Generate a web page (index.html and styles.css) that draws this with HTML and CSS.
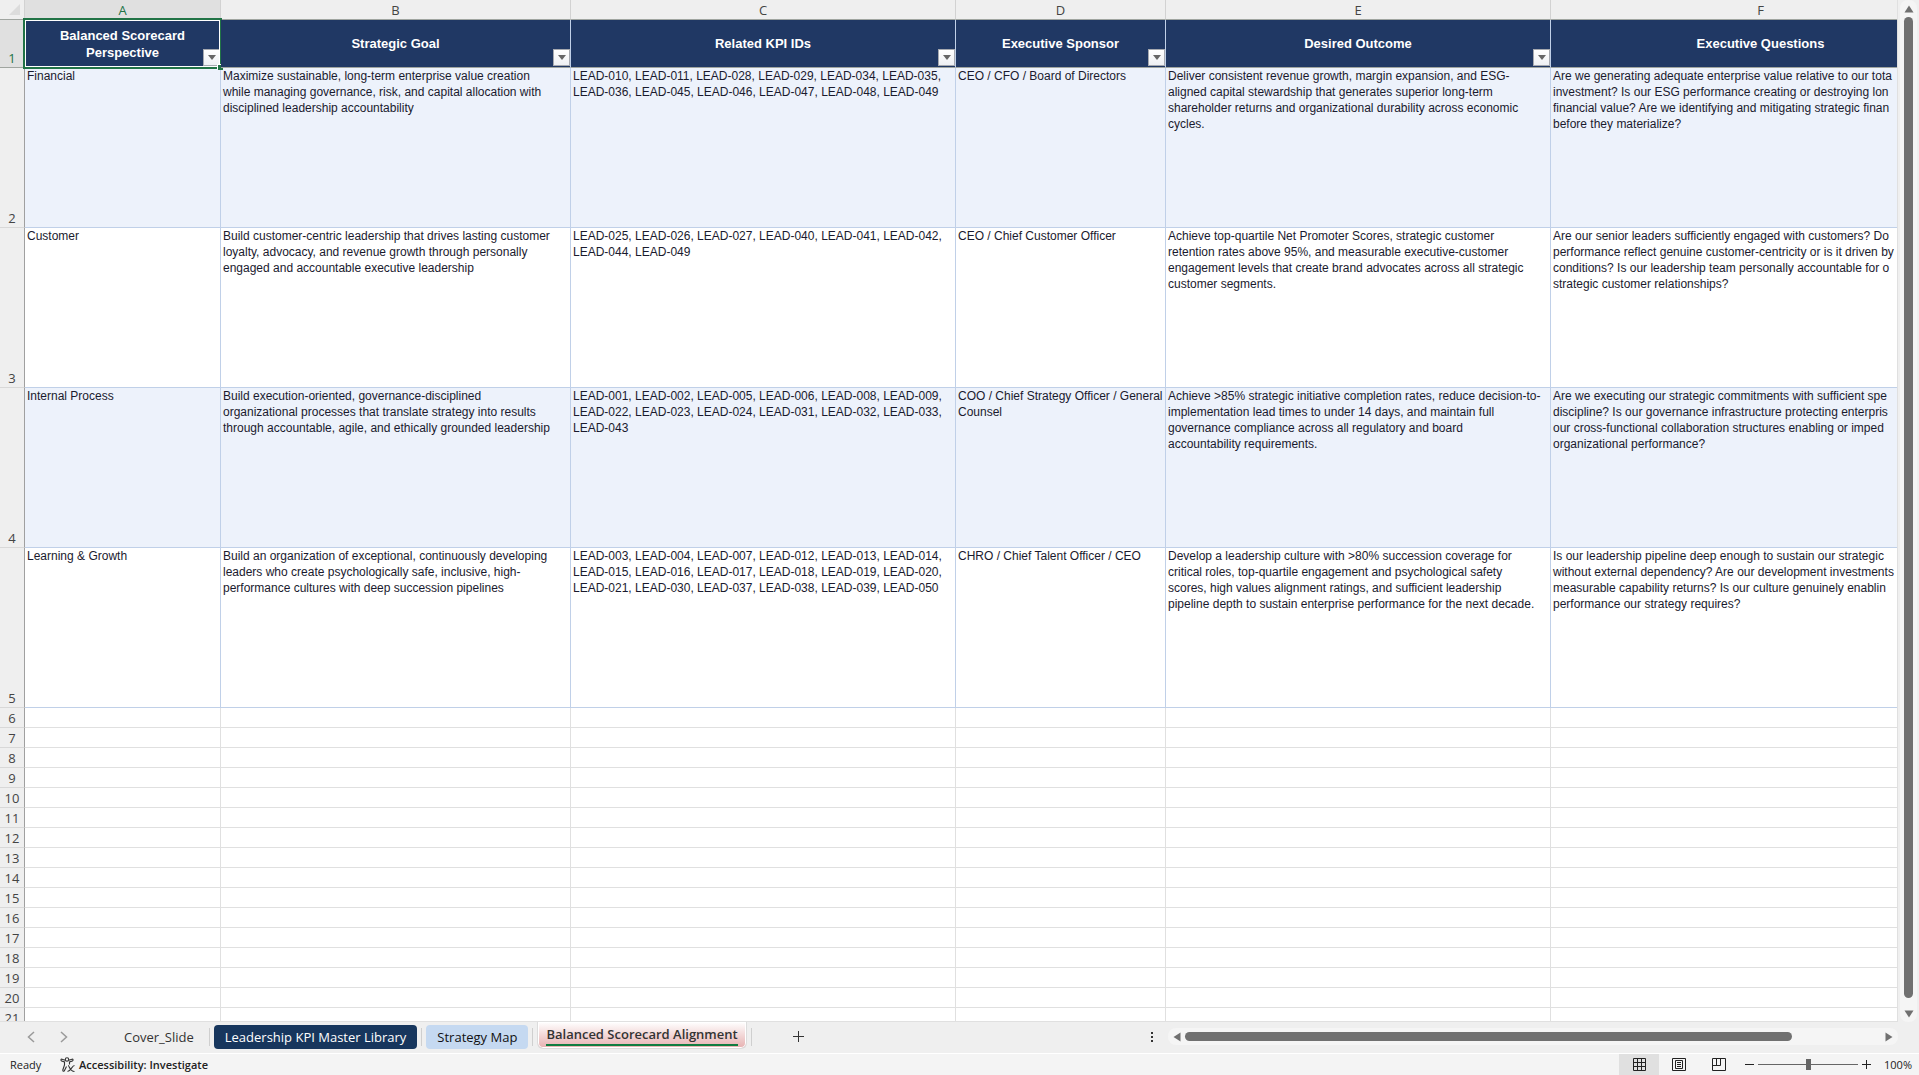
FILE: index.html
```html
<!DOCTYPE html>
<html lang="en">
<head>
<meta charset="utf-8">
<title>Balanced Scorecard Alignment</title>
<link rel="stylesheet" href="styles.css">
</head>
<body>
<main class="workbook">
  <div class="sheet-area">
    <div class="sheet">
      <table class="grid">
        <colgroup><col class="c-num"><col class="c-a"><col class="c-b"><col class="c-c"><col class="c-d"><col class="c-e"><col class="c-f"></colgroup>
        <thead>
          <tr class="letters"><th class="corner" aria-label="Select all"><svg width="11" height="11" viewBox="0 0 11 11"><path d="M11 0V11H0Z" fill="#dcdcdc"/></svg></th><th class="active" scope="col">A</th><th scope="col">B</th><th scope="col">C</th><th scope="col">D</th><th scope="col">E</th><th scope="col">F</th></tr>
        </thead>
        <tbody>
          <tr class="titles">
            <th class="num active" scope="row">1</th>
            <td class="selected">Balanced Scorecard<br>Perspective<button class="filter" aria-label="Filter perspective"><svg width="8" height="5" viewBox="0 0 8 5"><path d="M0 0H8L4 5Z" fill="#666"/></svg></button><span class="cursor"></span></td>
            <td>Strategic Goal<button class="filter" aria-label="Filter goal"><svg width="8" height="5" viewBox="0 0 8 5"><path d="M0 0H8L4 5Z" fill="#666"/></svg></button></td>
            <td>Related KPI IDs<button class="filter" aria-label="Filter KPI IDs"><svg width="8" height="5" viewBox="0 0 8 5"><path d="M0 0H8L4 5Z" fill="#666"/></svg></button></td>
            <td>Executive Sponsor<button class="filter" aria-label="Filter sponsor"><svg width="8" height="5" viewBox="0 0 8 5"><path d="M0 0H8L4 5Z" fill="#666"/></svg></button></td>
            <td>Desired Outcome<button class="filter" aria-label="Filter outcome"><svg width="8" height="5" viewBox="0 0 8 5"><path d="M0 0H8L4 5Z" fill="#666"/></svg></button></td>
            <td>Executive Questions</td>
          </tr>
          <tr class="entry tinted">
            <th class="num" scope="row">2</th>
            <td>Financial</td>
            <td>Maximize sustainable, long-term enterprise value creation<br>while managing governance, risk, and capital allocation with<br>disciplined leadership accountability</td>
            <td>LEAD-010, LEAD-011, LEAD-028, LEAD-029, LEAD-034, LEAD-035,<br>LEAD-036, LEAD-045, LEAD-046, LEAD-047, LEAD-048, LEAD-049</td>
            <td>CEO / CFO / Board of Directors</td>
            <td>Deliver consistent revenue growth, margin expansion, and ESG-<br>aligned capital stewardship that generates superior long-term<br>shareholder returns and organizational durability across economic<br>cycles.</td>
            <td>Are we generating adequate enterprise value relative to our tota<br>investment? Is our ESG performance creating or destroying lon<br>financial value? Are we identifying and mitigating strategic finan<br>before they materialize?</td>
          </tr>
          <tr class="entry">
            <th class="num" scope="row">3</th>
            <td>Customer</td>
            <td>Build customer-centric leadership that drives lasting customer<br>loyalty, advocacy, and revenue growth through personally<br>engaged and accountable executive leadership</td>
            <td>LEAD-025, LEAD-026, LEAD-027, LEAD-040, LEAD-041, LEAD-042,<br>LEAD-044, LEAD-049</td>
            <td>CEO / Chief Customer Officer</td>
            <td>Achieve top-quartile Net Promoter Scores, strategic customer<br>retention rates above 95%, and measurable executive-customer<br>engagement levels that create brand advocates across all strategic<br>customer segments.</td>
            <td>Are our senior leaders sufficiently engaged with customers? Do<br>performance reflect genuine customer-centricity or is it driven by<br>conditions? Is our leadership team personally accountable for o<br>strategic customer relationships?</td>
          </tr>
          <tr class="entry tinted">
            <th class="num" scope="row">4</th>
            <td>Internal Process</td>
            <td>Build execution-oriented, governance-disciplined<br>organizational processes that translate strategy into results<br>through accountable, agile, and ethically grounded leadership</td>
            <td>LEAD-001, LEAD-002, LEAD-005, LEAD-006, LEAD-008, LEAD-009,<br>LEAD-022, LEAD-023, LEAD-024, LEAD-031, LEAD-032, LEAD-033,<br>LEAD-043</td>
            <td>COO / Chief Strategy Officer / General<br>Counsel</td>
            <td>Achieve &gt;85% strategic initiative completion rates, reduce decision-to-<br>implementation lead times to under 14 days, and maintain full<br>governance compliance across all regulatory and board<br>accountability requirements.</td>
            <td>Are we executing our strategic commitments with sufficient spe<br>discipline? Is our governance infrastructure protecting enterpris<br>our cross-functional collaboration structures enabling or imped<br>organizational performance?</td>
          </tr>
          <tr class="entry">
            <th class="num" scope="row">5</th>
            <td>Learning &amp; Growth</td>
            <td>Build an organization of exceptional, continuously developing<br>leaders who create psychologically safe, inclusive, high-<br>performance cultures with deep succession pipelines</td>
            <td>LEAD-003, LEAD-004, LEAD-007, LEAD-012, LEAD-013, LEAD-014,<br>LEAD-015, LEAD-016, LEAD-017, LEAD-018, LEAD-019, LEAD-020,<br>LEAD-021, LEAD-030, LEAD-037, LEAD-038, LEAD-039, LEAD-050</td>
            <td>CHRO / Chief Talent Officer / CEO</td>
            <td>Develop a leadership culture with &gt;80% succession coverage for<br>critical roles, top-quartile engagement and psychological safety<br>scores, high values alignment ratings, and sufficient leadership<br>pipeline depth to sustain enterprise performance for the next decade.</td>
            <td>Is our leadership pipeline deep enough to sustain our strategic<br>without external dependency? Are our development investments<br>measurable capability returns? Is our culture genuinely enablin<br>performance our strategy requires?</td>
          </tr>
          <tr><th class="num" scope="row">6</th><td></td><td></td><td></td><td></td><td></td><td></td></tr>
          <tr><th class="num" scope="row">7</th><td></td><td></td><td></td><td></td><td></td><td></td></tr>
          <tr><th class="num" scope="row">8</th><td></td><td></td><td></td><td></td><td></td><td></td></tr>
          <tr><th class="num" scope="row">9</th><td></td><td></td><td></td><td></td><td></td><td></td></tr>
          <tr><th class="num" scope="row">10</th><td></td><td></td><td></td><td></td><td></td><td></td></tr>
          <tr><th class="num" scope="row">11</th><td></td><td></td><td></td><td></td><td></td><td></td></tr>
          <tr><th class="num" scope="row">12</th><td></td><td></td><td></td><td></td><td></td><td></td></tr>
          <tr><th class="num" scope="row">13</th><td></td><td></td><td></td><td></td><td></td><td></td></tr>
          <tr><th class="num" scope="row">14</th><td></td><td></td><td></td><td></td><td></td><td></td></tr>
          <tr><th class="num" scope="row">15</th><td></td><td></td><td></td><td></td><td></td><td></td></tr>
          <tr><th class="num" scope="row">16</th><td></td><td></td><td></td><td></td><td></td><td></td></tr>
          <tr><th class="num" scope="row">17</th><td></td><td></td><td></td><td></td><td></td><td></td></tr>
          <tr><th class="num" scope="row">18</th><td></td><td></td><td></td><td></td><td></td><td></td></tr>
          <tr><th class="num" scope="row">19</th><td></td><td></td><td></td><td></td><td></td><td></td></tr>
          <tr><th class="num" scope="row">20</th><td></td><td></td><td></td><td></td><td></td><td></td></tr>
          <tr><th class="num" scope="row">21</th><td></td><td></td><td></td><td></td><td></td><td></td></tr>
        </tbody>
      </table>
    </div>
    <div class="vscroll">
      <button class="arrow" aria-label="Scroll up"><svg width="10" height="8" viewBox="0 0 10 8"><path d="M5 0.500L9.500 7.500H0.500Z" fill="#707070"/></svg></button>
      <div class="vthumb"></div>
      <button class="arrow" aria-label="Scroll down"><svg width="10" height="8" viewBox="0 0 10 8"><path d="M5 7.500L9.500 0.500H0.500Z" fill="#707070"/></svg></button>
    </div>
  </div>

  <nav class="tabbar" aria-label="Sheets">
    <div class="steps">
      <button aria-label="Previous sheet"><svg width="8" height="12" viewBox="0 0 8 12"><path d="M7 1L1.500 6L7 11" fill="none" stroke="#9a9a9a" stroke-width="1.500"/></svg></button>
      <button aria-label="Next sheet"><svg width="8" height="12" viewBox="0 0 8 12"><path d="M1 1L6.500 6L1 11" fill="none" stroke="#9a9a9a" stroke-width="1.500"/></svg></button>
    </div>
    <button class="tab">Cover_Slide</button>
    <i class="divider"></i>
    <button class="tab navy">Leadership KPI Master Library</button>
    <i class="divider"></i>
    <button class="tab blue">Strategy Map</button>
    <i class="divider"></i>
    <button class="tab current"><span>Balanced Scorecard Alignment</span></button>
    <i class="divider"></i>
    <button class="add" aria-label="New sheet"><svg width="11" height="11" viewBox="0 0 11 11"><path d="M5.500 0V11M0 5.500H11" stroke="#333"/></svg></button>
    <div class="hgroup">
      <button class="dots" aria-label="Resize"><svg width="2" height="10" viewBox="0 0 2 10"><path d="M0 0H2V2H0ZM0 4H2V6H0ZM0 8H2V10H0Z" fill="#333"/></svg></button>
      <div class="hscroll">
        <button class="arrow" aria-label="Scroll left"><svg width="8" height="10" viewBox="0 0 8 10"><path d="M0.500 5L7.500 0.500V9.500Z" fill="#707070"/></svg></button>
        <div class="hthumb"></div>
        <button class="arrow" aria-label="Scroll right"><svg width="8" height="10" viewBox="0 0 8 10"><path d="M7.500 5L0.500 0.500V9.500Z" fill="#707070"/></svg></button>
      </div>
    </div>
  </nav>

  <footer class="status">
    <span class="ready">Ready</span>
    <button class="access"><svg width="16" height="16" viewBox="0 0 16 16" fill="none" stroke="#333" stroke-width="1.100"><circle cx="7" cy="2.500" r="1.700"/><path d="M5.300 3.300L2 2.200C.8 1.900.6 3.500 1.600 3.900L4.500 5V8L2.800 13C2.600 14.300 4.100 14.700 4.500 13.500L6.500 9.500M8.700 3.300L12 2.200C13.200 1.900 13.400 3.500 12.400 3.900L9.500 5V7.500M8 8.500C9.500 8.500 9.500 14 14.500 14.500M14.500 8.500C12 8.500 11 14 7.500 14.500"/></svg><span>Accessibility: Investigate</span></button>
    <div class="views">
      <button class="view on" aria-label="Normal"><svg width="13" height="13" viewBox="0 0 13 13"><path d="M.5 .5H12.500V12.500H.5ZM4.500 0V13M8.500 0V13M0 4.500H13M0 8.500H13" fill="none" stroke="#222"/></svg></button>
      <button class="view" aria-label="Page layout"><svg width="14" height="13" viewBox="0 0 14 13"><path d="M.5 .5H13.500V12.500H.5ZM3.500 2.500H10.500V10.500H3.500ZM5 4.500H9M5 6.500H9M5 8.500H9" fill="none" stroke="#222"/></svg></button>
      <button class="view" aria-label="Page break preview"><svg width="14" height="13" viewBox="0 0 14 13"><path d="M.5 .5H13.500V12.500H.5ZM4.500 0V7.500M8.500 0V7.500M0 7.500H8.500" fill="none" stroke="#222"/></svg></button>
    </div>
    <button class="zoomstep" aria-label="Zoom out"><svg width="9" height="9" viewBox="0 0 9 9"><path d="M0 4.500H9" stroke="#222"/></svg></button>
    <input class="slider" type="range" min="0" max="100" value="50" aria-label="Zoom">
    <button class="zoomstep" aria-label="Zoom in"><svg width="9" height="9" viewBox="0 0 9 9"><path d="M0 4.500H9M4.500 0V9" stroke="#222"/></svg></button>
    <span class="percent">100%</span>
  </footer>
</main>
</body>
</html>
```

FILE: styles.css
```css
* { box-sizing: border-box; }
body { margin: 0; font-family: "Open Sans", "Noto Sans", sans-serif; background: #efefef; color: #333; }
button { border: 0; padding: 0; margin: 0; background: none; font: inherit; color: inherit; display: flex; align-items: center; justify-content: center; }
svg { display: block; }

.workbook { height: 100vh; display: flex; flex-direction: column; overflow: hidden; }

/* Grid */
.sheet-area { flex: 1; min-height: 0; display: flex; }
.sheet { flex: 1; min-width: 0; overflow: hidden; border-right: 1px solid #e0e0e0; border-bottom: 1px solid #e0e0e0; }
.grid { table-layout: fixed; border-collapse: separate; border-spacing: 0; width: 1971px; background: #fff; }
.c-num { width: 25px; }
.c-a { width: 196px; }
.c-b { width: 350px; }
.c-c, .c-e { width: 385px; }
.c-d { width: 210px; }
.c-f { width: 420px; }
.grid th, .grid td { padding: 0; height: 20px; border-right: 1px solid #e0e0e0; border-bottom: 1px solid #e0e0e0; overflow: hidden; white-space: nowrap; }

.letters th { background: #efefef; border-right-color: #d2d2d2; border-bottom-color: #a0a5a0; font-size: 13px; line-height: 18px; font-weight: 400; color: #444; }
.letters .corner svg { margin-left: 9px; }
.grid .num { background: #efefef; border-right-color: #a0a0a0; border-bottom-color: #d8d8d8; font-size: 13px; line-height: 18px; font-weight: 400; color: #444; vertical-align: bottom; text-align: center; }
.letters .active, .grid .num.active { background: #e0e0e0; color: #217346; }
.grid .num.active { border-bottom-color: #a0a5a0; }

.grid .titles td { position: relative; height: 48px; background: #203864; color: #fff; font: 700 13px/17px "Liberation Sans", Arial, sans-serif; text-align: center; vertical-align: middle; border-right-color: #c0d0e8; border-bottom-color: #a0a5a0; }
.grid .titles .selected { overflow: visible; }
.cursor { position: absolute; inset: -2px; border: 2px solid #217346; box-shadow: inset 0 0 0 1px #fff; pointer-events: none; }
.cursor::after { content: ""; position: absolute; right: -3px; bottom: -3px; width: 5px; height: 5px; background: #217346; box-shadow: -1px -1px 0 #fff; }
.filter { position: absolute; right: 0; bottom: 1px; width: 17px; height: 17px; background: linear-gradient(#fff, #eef0f4); border: 1px solid #a6a9b0; }

.grid .entry td { height: 160px; padding: 0 2px; vertical-align: top; font: 12px/16px "Liberation Sans", Arial, sans-serif; color: #1a1a2e; border-color: #c0d0e8; }
.grid .tinted td { background: #edf2fb; }

/* Scroll bars */
.vscroll { width: 17px; margin: 0 2px; padding: 5px 0 4px; display: flex; flex-direction: column; align-items: center; gap: 4px; background: #f5f5f5; border-radius: 8px; }
.vthumb { flex: 1; width: 9px; border-radius: 5px; background: #707070; margin-bottom: 8px; }

/* Sheet tabs */
.tabbar { height: 31px; display: flex; align-items: flex-start; font-size: 13px; line-height: 20px; }
.steps { display: flex; gap: 25px; padding: 9px 0 0 27px; width: 113px; }
.tab { height: 24px; margin-top: 3px; padding: 0 11px; border-radius: 4px; white-space: nowrap; }
.divider { width: 1px; height: 18px; margin: 6px 4px 0; background: #cfcfcf; }
.navy { background: #17365d; color: #fff; }
.blue { background: #c5d9f1; color: #111; }
.current { height: 27px; margin-top: 0; padding: 0 8px; border: 1px solid #dcdcdc; border-top: 0; border-radius: 0 0 6px 6px; background: linear-gradient(#fff, #e6b0b0); box-shadow: inset 0 0 0 1px #fff; font-weight: 600; }
.current span { border-bottom: 2px solid #107c41; line-height: 20px; }
.add { width: 24px; margin: 9px 0 0 31px; }
.hgroup { margin-left: auto; display: flex; align-items: center; gap: 15px; padding: 6px 21px 0 0; width: 40%; }
.hscroll { flex: 1; height: 17px; padding: 0 5px; border-radius: 8px; background: #f5f5f5; display: flex; align-items: center; gap: 4px; }
.hthumb { flex: 1; height: 9px; border-radius: 5px; background: #707070; margin-right: 89px; }

/* Status bar */
.status { height: 22px; border-top: 1px solid #fff; background: #f4f4f4; display: flex; align-items: center; font-size: 11px; line-height: 16px; color: #222; }
.ready { padding-left: 10px; width: 60px; }
.access { gap: 3px; font-weight: 600; }
.views { margin-left: auto; display: flex; align-self: stretch; }
.view { width: 40px; }
.view.on { background: #e0e0e0; }
.zoomstep { width: 9px; }
.views + .zoomstep { margin-left: 6px; }
.slider { appearance: none; width: 100px; height: 12px; margin: 0 4px; background: linear-gradient(#666, #666) center / 100% 1px no-repeat; }
.slider::-webkit-slider-thumb { appearance: none; width: 5px; height: 11px; background: #666; }
.percent { padding: 0 7px 0 13px; }
```
